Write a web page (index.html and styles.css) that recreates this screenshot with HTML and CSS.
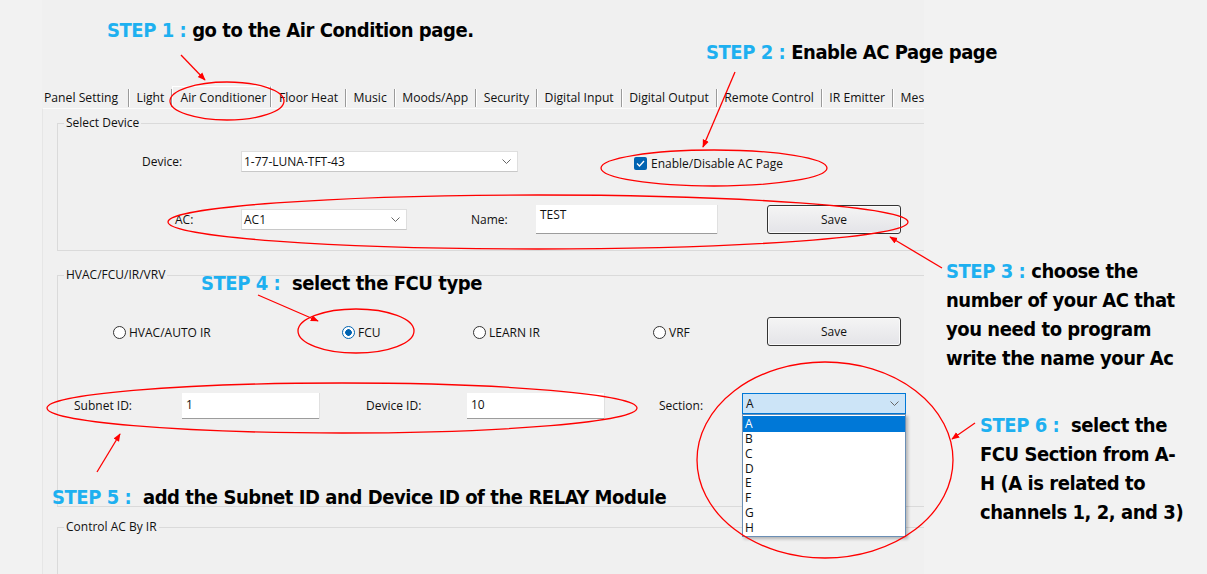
FILE: index.html
```html
<!DOCTYPE html>
<html lang="en">
<head>
	<meta charset="UTF-8">
	<title>Air Conditioner setup steps</title>
	<link rel="stylesheet" href="styles.css">
</head>
<body>
<div class="screen">

	<div class="app">
		<ul class="tabs">
			<li>Panel Setting</li>
			<li>Light</li>
			<li class="active">Air Conditioner</li>
			<li>Floor Heat</li>
			<li>Music</li>
			<li>Moods/App</li>
			<li>Security</li>
			<li>Digital Input</li>
			<li>Digital Output</li>
			<li>Remote Control</li>
			<li>IR Emitter</li>
			<li class="last">Mes</li>
		</ul>

		<div class="page">
			<fieldset class="group group-device">
				<legend>Select Device</legend>
				<div class="row row-device">
					<span class="lbl lbl-device">Device:</span>
					<div class="combo combo-device">
						<span>1-77-LUNA-TFT-43</span>
						<svg class="chev" width="9" height="5" viewBox="0 0 9 5"><polyline points="0.5,0.5 4.5,4.5 8.5,0.5"/></svg>
					</div>
					<label class="check">
						<span class="box"><svg width="9" height="7" viewBox="0 0 9 7"><polyline points="1,3.5 3.5,6 8,1"/></svg></span>
						Enable/Disable AC Page
					</label>
				</div>
				<div class="row row-ac">
					<span class="lbl lbl-ac">AC:</span>
					<div class="combo combo-ac">
						<span>AC1</span>
						<svg class="chev" width="9" height="5" viewBox="0 0 9 5"><polyline points="0.5,0.5 4.5,4.5 8.5,0.5"/></svg>
					</div>
					<span class="lbl lbl-name">Name:</span>
					<div class="field field-name">TEST</div>
					<button type="button" class="btn btn-save-ac">Save</button>
				</div>
			</fieldset>

			<fieldset class="group group-type">
				<legend>HVAC/FCU/IR/VRV</legend>
				<div class="row row-type">
					<label class="radio radio-hvac"><span class="dot"></span>HVAC/AUTO IR</label>
					<label class="radio radio-fcu on"><span class="dot"></span>FCU</label>
					<label class="radio radio-learn"><span class="dot"></span>LEARN IR</label>
					<label class="radio radio-vrf"><span class="dot"></span>VRF</label>
					<button type="button" class="btn">Save</button>
				</div>
				<div class="row row-ids">
					<span class="lbl lbl-subnet">Subnet ID:</span>
					<div class="field field-id">1</div>
					<span class="lbl lbl-devid">Device ID:</span>
					<div class="field field-id">10</div>
					<span class="lbl lbl-section">Section:</span>
					<div class="combo combo-section open">
						<span>A</span>
						<svg class="chev" width="9" height="5" viewBox="0 0 9 5"><polyline points="0.5,0.5 4.5,4.5 8.5,0.5"/></svg>
						<ul class="droplist">
							<li class="sel">A</li>
							<li>B</li>
							<li>C</li>
							<li>D</li>
							<li>E</li>
							<li>F</li>
							<li>G</li>
							<li>H</li>
						</ul>
					</div>
				</div>
			</fieldset>

			<fieldset class="group group-ir">
				<legend>Control AC By IR</legend>
			</fieldset>
		</div>
	</div>

	<!-- red annotations drawn over the screenshot -->
	<svg class="marks" width="1207" height="574" viewBox="0 0 1207 574">
		<defs>
			<marker id="head" viewBox="0 0 10 10" refX="9" refY="5" markerWidth="8" markerHeight="8" markerUnits="userSpaceOnUse" orient="auto">
				<path d="M0,1 L10,5 L0,9 z" fill="#f00"/>
			</marker>
		</defs>
		<ellipse cx="227" cy="101" rx="57" ry="19"/>
		<ellipse cx="714" cy="168" rx="113" ry="18"/>
		<ellipse cx="538" cy="222" rx="370" ry="27"/>
		<ellipse cx="356" cy="331" rx="58" ry="22"/>
		<ellipse cx="342" cy="408" rx="295" ry="25"/>
		<ellipse cx="825" cy="460" rx="128" ry="98"/>
		<line x1="181" y1="55" x2="205" y2="80" marker-end="url(#head)"/>
		<line x1="735" y1="72" x2="703" y2="147" marker-end="url(#head)"/>
		<line x1="942" y1="268" x2="890" y2="237" marker-end="url(#head)"/>
		<line x1="258" y1="295" x2="318" y2="321" marker-end="url(#head)"/>
		<line x1="97" y1="472" x2="120" y2="434" marker-end="url(#head)"/>
		<line x1="975" y1="423" x2="952" y2="439" marker-end="url(#head)"/>
	</svg>

	<p class="step step-1"><b>STEP 1 :</b> go to the Air Condition page.</p>
	<p class="step step-2"><b>STEP 2 :</b> Enable AC Page page</p>
	<p class="step step-3"><b>STEP 3 :</b> choose the<br>number of your AC that<br>you need to program<br>write the name your Ac</p>
	<p class="step step-4"><b>STEP 4 :</b>&nbsp; select the FCU type</p>
	<p class="step step-5"><b>STEP 5 :</b>&nbsp; add the Subnet ID and Device ID of the RELAY Module</p>
	<p class="step step-6"><b>STEP 6 :</b>&nbsp; select the<br>FCU Section from A-<br>H (A is related to<br>channels 1, 2, and 3)</p>

</div>
</body>
</html>
```

FILE: styles.css
```css
body{
	margin: 0;
	background-color: #f2f2f2;
	font-family: "Open Sans", "Noto Sans", sans-serif;
	font-size: 12px;
	color: #111;
}

.screen{
	position: relative;
	width: 1207px;
	height: 574px;
	overflow: hidden;
}

/* the program window, clipped at the right like the capture */
.app{
	margin-left: 42px;
	padding-top: 87px;
	width: 882px;
	height: 487px;
	overflow: hidden;
	background-color: #f0f0f0;
}

.tabs{
	display: flex;
	align-items: center;
	height: 21px;
	margin: 0;
	padding: 0;
	list-style: none;
	white-space: nowrap;
	font-size: 12.2px;
}

.tabs li{
	height: 18px;
	line-height: 18px;
	padding: 0 7px 0 7.5px;
	border-right: 1px solid #9a9a9a;
	box-shadow: 1px 0 0 #fff;
}

.tabs li:first-child{
	padding: 0 10px 0 2px;
}

.tabs li.active{
	box-sizing: border-box;
	height: 21px;
	margin-top: -2px;
	padding: 2px 4px 0 7px;
	border-left: 1px solid #fff;
	border-top: 1px solid #fff;
}

.tabs li.last{
	border-right: none;
	box-shadow: none;
}

.page{
	border-top: 1px solid #fbfbfb;
	border-left: 1px solid #e6e6e6;
	padding: 6px 0 0 14px;
}

.group{
	width: 900px;
	margin: 0;
	padding: 0;
	border: 1px solid #dadada;
}

.group legend{
	margin-left: 6px;
	padding: 0 2px;
	line-height: 16px;
}

.group-device{
	padding-bottom: 16px;
}

.group-type{
	margin-top: 16px;
	padding-bottom: 86px;
}

.group-ir{
	margin-top: 12px;
	height: 60px;
}

.row{
	display: flex;
	align-items: center;
}

.row-device{
	margin-top: 20px;
	height: 21px;
	padding-left: 84px;
}

.row-ac{
	margin-top: 33px;
	height: 29px;
	padding-left: 117px;
}

.row-type{
	margin-top: 34px;
	height: 28px;
	padding-left: 55px;
}

.row-ids{
	margin-top: 48px;
	height: 27px;
	padding-left: 16px;
}

.lbl-device{ width: 99px; }
.lbl-ac{ width: 66px; }
.lbl-name{ width: 65px; margin-left: 64px; }
.lbl-subnet{ width: 108px; margin-top: -2px; }
.lbl-devid{ width: 101px; margin-left: 47px; margin-top: -2px; }
.lbl-section{ width: 83px; margin-left: 55px; margin-top: -2px; }

.combo{
	position: relative;
	display: flex;
	align-items: center;
	box-sizing: border-box;
	height: 21px;
	padding-left: 2px;
	background-color: #fff;
	border: 1px solid #dedede;
	border-bottom-color: #c8c8c8;
}

.combo .chev{
	position: absolute;
	right: 6px;
	top: 7px;
}

.chev polyline{
	fill: none;
	stroke: #666;
	stroke-width: 1;
}

.combo-device{ width: 277px; }
.combo-ac{ width: 166px; }

.combo-section{
	width: 164px;
	align-self: flex-start;
	padding-left: 3px;
	background-color: #cce4f7;
	border-color: #0078d7;
}

.droplist{
	position: absolute;
	top: 20px;
	left: -1px;
	width: 164px;
	box-sizing: border-box;
	margin: 0;
	padding: 1px 0 0;
	list-style: none;
	background-color: #fff;
	border: 1px solid #6b8fb5;
	box-shadow: 2px 2px 3px rgba(0, 0, 0, 0.25);
}

.droplist li{
	height: 14.8px;
	line-height: 14.8px;
	padding-left: 2px;
}

.droplist li.sel{
	height: 16px;
	line-height: 16px;
	background-color: #0078d7;
	color: #fff;
}

.check{
	display: flex;
	align-items: center;
	margin-left: 116px;
	margin-top: 3px;
}

.check .box{
	display: flex;
	align-items: center;
	justify-content: center;
	width: 13px;
	height: 13px;
	margin-right: 4px;
	border-radius: 2px;
	background-color: #0063b1;
}

.check polyline{
	fill: none;
	stroke: #fff;
	stroke-width: 1.3;
}

.field{
	box-sizing: border-box;
	background-color: #fff;
	border-bottom: 1px solid #9c9c9c;
	box-shadow: 1px 0 0 #e0e0e0;
	padding: 2px 4px;
	line-height: 16px;
	align-self: stretch;
}

.field-name{
	width: 181px;
}

.field-id{
	width: 137px;
	height: 26px;
	padding-top: 4px;
	align-self: flex-start;
}

.btn{
	box-sizing: border-box;
	width: 134px;
	height: 29px;
	margin-left: 50px;
	padding: 0;
	font: inherit;
	color: #111;
	border: 1px solid #333;
	border-radius: 3px;
	background: linear-gradient(#f4f4f4, #e4e4e8);
	box-shadow: inset 0 0 0 1px #fafafa;
}

.row-type .btn{
	margin-left: 0;
}

.radio{
	display: flex;
	align-items: center;
	margin-top: 2px;
}

.radio .dot{
	box-sizing: border-box;
	width: 13px;
	height: 13px;
	margin-right: 3px;
	border: 1px solid #333;
	border-radius: 50%;
	background-color: #fff;
}

.radio.on .dot{
	border: 1px solid #0063b1;
	background: radial-gradient(circle, #0063b1 0 3px, #fff 3.6px);
}

.radio-hvac{ width: 229px; }
.radio-fcu{ width: 131px; }
.radio-learn{ width: 180px; }
.radio-vrf{ width: 114px; }

/* annotations */
.marks{
	position: absolute;
	top: 0;
	left: 0;
	pointer-events: none;
}

.marks ellipse, .marks line{
	fill: none;
	stroke: #f00;
	stroke-width: 1.3;
}

.step{
	position: absolute;
	margin: 0;
	font-family: "Liberation Sans Narrow", "DejaVu Sans Condensed", "Open Sans", sans-serif;
	font-weight: bold;
	font-size: 20px;
	line-height: 29px;
	letter-spacing: -0.45px;
	color: #000;
	white-space: nowrap;
}

.step b{
	color: #1eb0f0;
}

.step-1{ left: 107px; top: 16px; }
.step-2{ left: 706px; top: 38px; }
.step-3{ left: 946px; top: 257px; }
.step-4{ left: 201px; top: 269px; }
.step-5{ left: 52px; top: 483px; }
.step-6{ left: 980px; top: 411px; }
```
